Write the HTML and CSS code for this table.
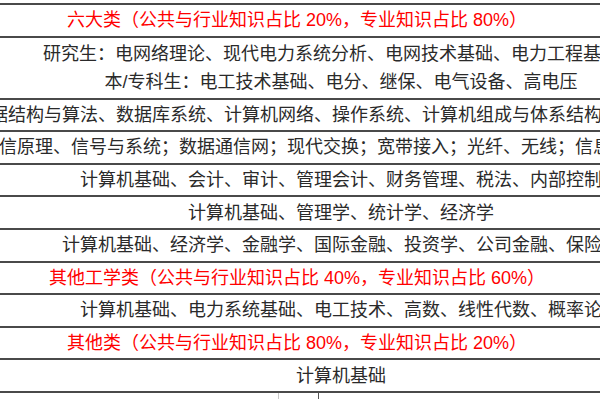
FILE: index.html
```html
<!DOCTYPE html>
<html lang="zh-CN">
<head>
<meta charset="utf-8">
<title>考试科目</title>
<link rel="stylesheet" href="styles.css">
</head>
<body>
<div class="sheet">
  <div class="row head"><span class="txt red">六大类（公共与行业知识占比 20%，专业知识占比 80%）</span></div>
  <div class="row item double">
    <span class="txt pad-r">研究生：电网络理论、现代电力系统分析、电网技术基础、电力工程基础</span>
    <span class="txt">本/专科生：电工技术基础、电分、继保、电气设备、高电压</span>
  </div>
  <div class="row cut"><span class="txt shift-a">数据结构与算法、数据库系统、计算机网络、操作系统、计算机组成与体系结构</span></div>
  <div class="row cut"><span class="txt shift-b">通信原理、信号与系统；数据通信网；现代交换；宽带接入；光纤、无线；信息</span></div>
  <div class="row item"><span class="txt">计算机基础、会计、审计、管理会计、财务管理、税法、内部控制</span></div>
  <div class="row item"><span class="txt">计算机基础、管理学、统计学、经济学</span></div>
  <div class="row item"><span class="txt">计算机基础、经济学、金融学、国际金融、投资学、公司金融、保险学</span></div>
  <div class="row head"><span class="txt red">其他工学类（公共与行业知识占比 40%，专业知识占比 60%）</span></div>
  <div class="row item"><span class="txt">计算机基础、电力系统基础、电工技术、高数、线性代数、概率论</span></div>
  <div class="row head"><span class="txt red">其他类（公共与行业知识占比 80%，专业知识占比 20%）</span></div>
  <div class="row item"><span class="txt">计算机基础</span></div>
</div>
<div class="tail"><span class="mark light"></span><span class="mark dark"></span></div>
</body>
</html>
```

FILE: styles.css
```css
html, body {
  margin: 0;
  padding: 0;
  background: #ffffff;
  overflow: hidden;
}

body {
  width: 600px;
  height: 400px;
  font-family: "Liberation Sans", "Noto Sans CJK SC", sans-serif;
  font-size: 18px;
  color: #2a2a2a;
}

.sheet {
  margin-top: 3px;
  border-top: 2px solid #4a4a4a;
}

.row {
  box-sizing: border-box;
  width: 600px;
  height: 32.6px;
  border-bottom: 2px solid #4a4a4a;
  display: flex;
  justify-content: center;
  align-items: center;
  white-space: nowrap;
}

.head {
  padding-right: 6px;
}

.item {
  padding-left: 82px;
}

.double {
  height: 62px;
  flex-direction: column;
  align-items: center;
  justify-content: center;
}

.double .txt {
  line-height: 28px;
}

.cut {
  justify-content: flex-start;
}

.txt {
  display: block;
  flex: none;
  line-height: 30px;
}

.pad-r {
  padding-right: 20px;
}

.shift-a {
  margin-left: -28px;
}

.shift-b {
  margin-left: -19px;
}

.red {
  color: #ff0000;
}

.tail {
  display: flex;
  height: 6px;
  padding-left: 278px;
  gap: 39px;
}

.mark {
  width: 1px;
  height: 6px;
}

.mark.light {
  background: #c8c8c8;
}

.mark.dark {
  background: #555555;
}
```
